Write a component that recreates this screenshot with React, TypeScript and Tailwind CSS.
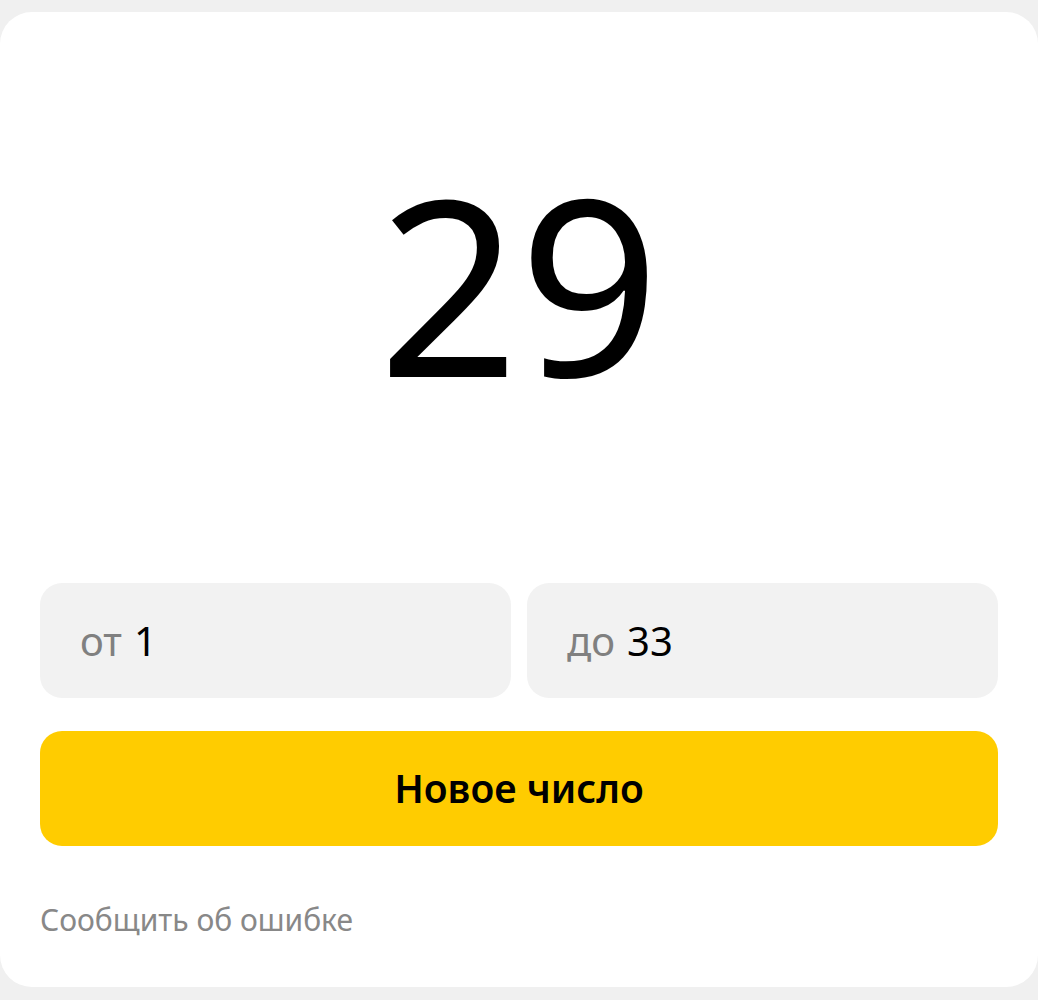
import React from "react";

const App = () => {
  return (
    <div
      className="min-h-screen bg-[#f0f0f0] pt-[12px]"
      style={{ fontFamily: '"Noto Sans", "Open Sans", sans-serif' }}
    >
      <div className="bg-white rounded-[32px] px-10 pb-[49px]">
        <div className="h-[571px] flex items-center justify-center">
          <p className="text-[246px] leading-none text-black -mt-[32px]">29</p>
        </div>

        <div className="grid grid-cols-2 gap-4">
          <label className="h-[115px] bg-[#f2f2f2] rounded-[22px] flex items-center px-10 gap-3">
            <span className="text-[40px] text-[#808080]">от</span>
            <span className="text-[40px] text-black">1</span>
          </label>
          <label className="h-[115px] bg-[#f2f2f2] rounded-[22px] flex items-center px-10 gap-3">
            <span className="text-[40px] text-[#808080]">до</span>
            <span className="text-[40px] text-black">33</span>
          </label>
        </div>

        <button className="mt-[33px] w-full h-[115px] bg-[#ffcc00] rounded-[22px] text-[39px] font-semibold text-black">
          Новое число
        </button>

        <p className="mt-[56px] text-[30px] leading-9 text-[#888888]">
          Сообщить об ошибке
        </p>
      </div>
    </div>
  );
};

export default App;
